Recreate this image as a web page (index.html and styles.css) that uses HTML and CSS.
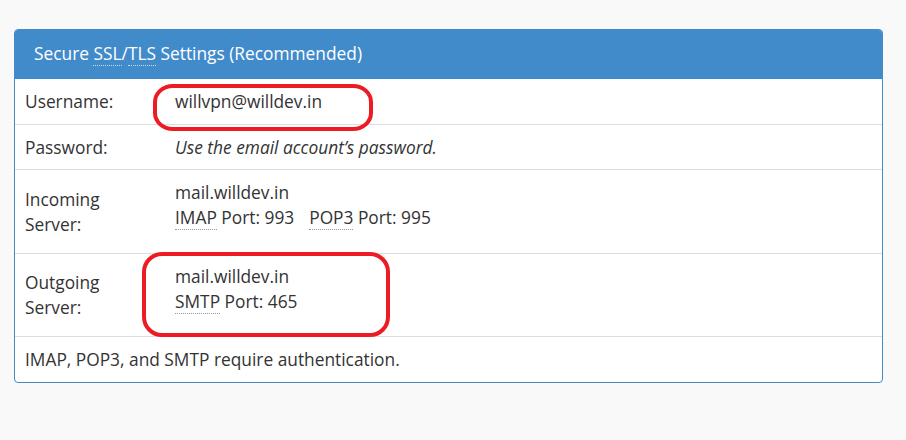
FILE: index.html
```html
<!DOCTYPE html>
<html>
<head>
<meta charset="utf-8">
<link rel="stylesheet" href="styles.css">
</head>
<body>
<div class="panel">
  <div class="panel-heading">Secure <abbr class="abbr">SSL</abbr>/<abbr class="abbr">TLS</abbr> Settings (Recommended)</div>
  <div class="row">
    <div class="label">Username:</div>
    <div class="value">willvpn@willdev.in</div>
  </div>
  <div class="row">
    <div class="label">Password:</div>
    <div class="value"><em>Use the email account’s password.</em></div>
  </div>
  <div class="row server">
    <div class="label">Incoming Server:</div>
    <div class="value">
      <div>mail.willdev.in</div>
      <div><span class="port"><abbr class="abbr">IMAP</abbr> Port: 993</span><span class="port"><abbr class="abbr">POP3</abbr> Port: 995</span></div>
    </div>
  </div>
  <div class="row server">
    <div class="label">Outgoing Server:</div>
    <div class="value">
      <div>mail.willdev.in</div>
      <div><span class="port"><abbr class="abbr">SMTP</abbr> Port: 465</span></div>
    </div>
  </div>
  <div class="row footer">
    <div class="value">IMAP, POP3, and SMTP require authentication.</div>
  </div>
</div>
<div class="mark mark-user"></div>
<div class="mark mark-out"></div>
</body>
</html>
```
FILE: styles.css
```css
html, body {
  margin: 0;
  padding: 0;
}
body {
  background: #f9f9f9;
  font-family: "Open Sans", "Liberation Sans", sans-serif;
  font-size: 17.33px;
  line-height: 24.76px;
  color: #333;
  padding: 29px 0 0 14px;
  height: 440px;
  box-sizing: border-box;
}
.panel {
  width: 869px;
  box-sizing: border-box;
  background: #fff;
  border: 1px solid #428bca;
  border-radius: 4px;
  overflow: hidden;
}
.panel-heading {
  background: #428bca;
  color: #fff;
  padding: 11px 19px 13px;
}
.abbr {
  text-decoration: none;
  border-bottom: 1px dotted #999;
}
.panel-heading .abbr {
  border-bottom-color: rgba(255,255,255,0.7);
}
.row {
  display: flex;
  border-top: 1px solid #ddd;
}
.panel-heading + .row {
  border-top: none;
}
.label {
  width: 150px;
  flex: none;
  box-sizing: border-box;
  padding: 10px 10px;
  align-self: center;
}
.value {
  padding: 10px 10px;
}
.row.server .label {
  width: 110px;
  margin-right: 40px;
}
.row.server .value {
  padding: 10px 10px 23px;
}
.port + .port {
  margin-left: 15px;
}
em {
  font-style: italic;
}
.mark {
  position: absolute;
  border: 4px solid #ed1c24;
  box-sizing: border-box;
}
.mark-user {
  left: 153px;
  top: 84px;
  width: 220px;
  height: 47px;
  border-radius: 20px / 18px;
}
.mark-out {
  left: 142px;
  top: 252px;
  width: 248px;
  height: 85px;
  border-radius: 20px;
}
```
